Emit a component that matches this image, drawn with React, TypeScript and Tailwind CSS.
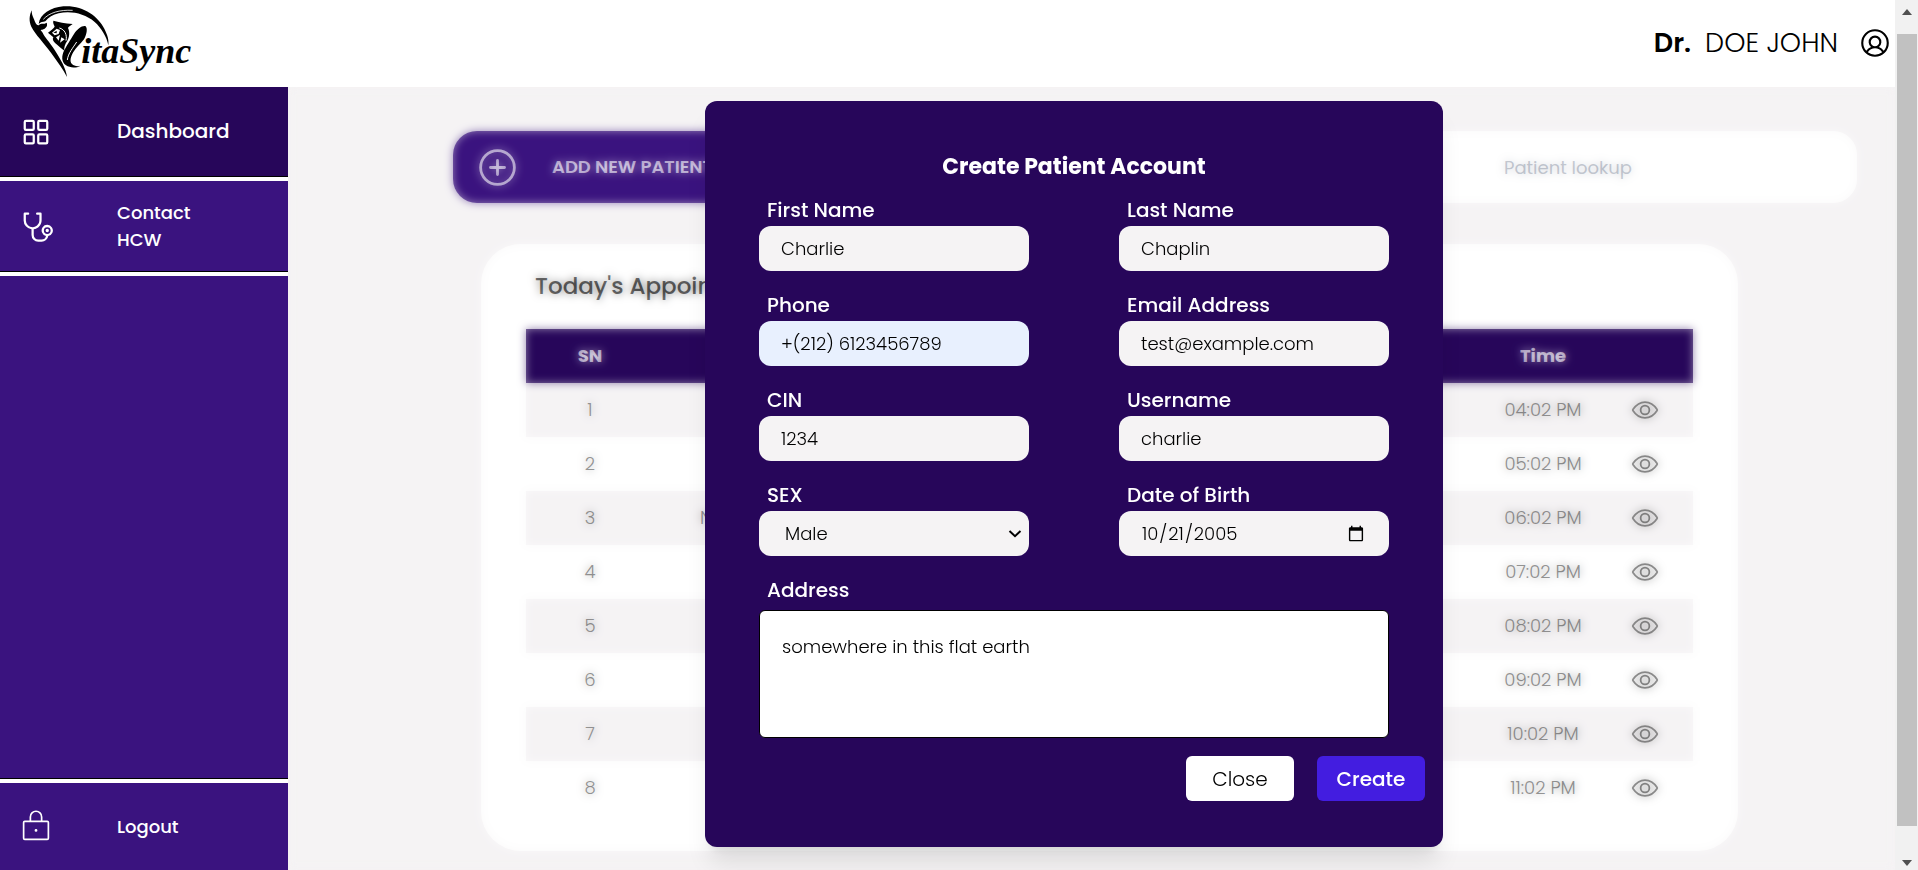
import type { ReactNode } from "react";
import { PiSquaresFour, PiStethoscope, PiLockLight, PiUserCircle, PiPlusCircle } from "react-icons/pi";
import { IoEyeOutline } from "react-icons/io5";

const appointments = [
  { sn: 1, name: "", time: "04:02 PM" },
  { sn: 2, name: "", time: "05:02 PM" },
  { sn: 3, name: "N", time: "06:02 PM" },
  { sn: 4, name: "", time: "07:02 PM" },
  { sn: 5, name: "", time: "08:02 PM" },
  { sn: 6, name: "", time: "09:02 PM" },
  { sn: 7, name: "", time: "10:02 PM" },
  { sn: 8, name: "", time: "11:02 PM" },
];

function Logo() {
  return (
    <svg viewBox="0 0 540 240" className="h-20 w-[180px] self-start" role="img" aria-label="VitaSync">
      {/* hood and blade */}
      <path d="M23 31 C15 48 15 66 22 80 C34 104 60 128 82 160 C100 186 118 208 129 231 C126 206 110 178 92 150 C76 124 62 112 56 98 C48 88 48 92 58 88 C66 84 72 78 68 68 C60 74 50 68 46 74 C40 80 34 70 30 58 C25 48 23 40 23 31 Z" />
      <path d="M44 72 C48 42 80 22 118 19 C176 15 222 48 241 86 C251 106 255 120 253 136 C248 110 232 84 212 66 C182 40 140 32 104 40 C86 44 74 52 64 64 C56 66 50 66 44 72 Z" />
      <path d="M58 58 C76 38 106 29 146 31" fill="none" stroke="#fff" strokeWidth="2.5" />
      {/* face */}
      <path d="M88 62 C104 66 122 70 146 72 C138 78 134 80 132 84 C138 96 136 112 130 122 C122 134 120 142 121 152 C112 146 104 138 94 130 C88 124 84 118 88 112 C82 106 76 102 72 98 C80 92 88 86 92 80 C90 74 86 70 88 62 Z" />
      <path d="M84 98 L98 86 L108 90 L104 102 L92 106 Z M96 112 L108 104 L104 122 Z M112 112 L122 118 L108 128 Z" fill="#fff" />
      <path d="M106 84 C122 88 130 104 126 122 M90 96 L102 98" fill="none" stroke="#fff" strokeWidth="3" />
      <path d="M88 98 L98 92 L98 100 Z" />
      {/* right stroke of the V */}
      <path d="M121 150 C128 138 140 118 150 102 C160 86 174 76 184 78 C192 84 188 104 180 118 C170 132 156 142 148 156 C140 170 136 184 144 192 C150 198 160 200 170 197 C156 205 138 204 126 196 C112 186 112 168 121 150 Z" />
      <path d="M130 180 C132 160 148 142 158 126" fill="none" stroke="#fff" strokeWidth="3" />
      <text x="172" y="189" className="text-[108px] font-bold italic" style={{ fontFamily: "'Liberation Serif', serif" }}>
        itaSync
      </text>
    </svg>
  );
}

function SideLink({ icon, children, className }: { icon: ReactNode; children: ReactNode; className: string }) {
  return (
    <a href="#" className={`flex shrink-0 items-center pl-[18px] font-medium leading-[27px] text-white ${className}`}>
      <span className="w-[99px] text-[36px]">{icon}</span>
      <span className="w-24">{children}</span>
    </a>
  );
}

const fieldClass = "h-[45px] w-full rounded-xl text-lg font-light text-black outline-none";

function Field({ label, id, wide, children }: { label: string; id: string; wide?: boolean; children: ReactNode }) {
  return (
    <div className={wide ? "col-span-2" : ""}>
      <label htmlFor={id} className="mb-0.5 block pl-2 text-xl font-medium leading-7 text-white">
        {label}
      </label>
      {children}
    </div>
  );
}

function PatientModal() {
  return (
    <section role="dialog" aria-labelledby="modal-title" className="w-[738px] rounded-xl bg-[#27065a] pt-[49px] pb-[46px] shadow-xl">
      <h2 id="modal-title" className="text-center text-[22px] font-bold leading-[33px] text-white">
        Create Patient Account
      </h2>
      <form>
        <div className="mt-[13px] grid grid-cols-2 gap-x-[90px] gap-y-5 px-[54px]">
          <Field label="First Name" id="first">
            <input id="first" defaultValue="Charlie" className={`${fieldClass} bg-[#f5f3f4] px-[22px]`} />
          </Field>
          <Field label="Last Name" id="last">
            <input id="last" defaultValue="Chaplin" className={`${fieldClass} bg-[#f5f3f4] px-[22px]`} />
          </Field>
          <Field label="Phone" id="phone">
            <input id="phone" type="tel" defaultValue="+(212) 6123456789" className={`${fieldClass} bg-[#e8f0fe] px-[22px]`} />
          </Field>
          <Field label="Email Address" id="email">
            <input id="email" type="email" defaultValue="test@example.com" className={`${fieldClass} bg-[#f5f3f4] px-[22px]`} />
          </Field>
          <Field label="CIN" id="cin">
            <input id="cin" defaultValue="1234" className={`${fieldClass} bg-[#f5f3f4] px-[22px]`} />
          </Field>
          <Field label="Username" id="username">
            <input id="username" defaultValue="charlie" className={`${fieldClass} bg-[#f5f3f4] px-[22px]`} />
          </Field>
          <Field label="SEX" id="sex">
            <div className="relative">
              <select id="sex" defaultValue="Male" className={`${fieldClass} appearance-none bg-[#f5f3f4] pr-8 pl-[26px]`}>
                <option>Male</option>
                <option>Female</option>
              </select>
              <svg viewBox="0 0 14 8" className="pointer-events-none absolute top-[19px] right-[7px] h-2 w-3.5" fill="none" stroke="black" strokeWidth="2">
                <path d="M1.5 1 L7 6.2 L12.5 1" />
              </svg>
            </div>
          </Field>
          <Field label="Date of Birth" id="dob">
            <input id="dob" type="date" defaultValue="2005-10-21" className={`${fieldClass} bg-[#f5f3f4] px-[22px]`} />
          </Field>
          <Field label="Address" id="address" wide>
            <textarea
              id="address"
              defaultValue="somewhere in this flat earth"
              className="mt-1.5 block h-32 w-full resize-none rounded-md border border-black bg-white p-[22px] text-lg font-light leading-[27px] text-black outline-none"
            />
          </Field>
        </div>
        <div className="mt-[18px] flex justify-end gap-[23px] pr-[18px]">
          <button type="button" className="h-[45px] w-[108px] rounded-md bg-white text-xl font-light text-black">
            Close
          </button>
          <button type="submit" className="h-[45px] w-[108px] rounded-md bg-[#431de0] text-xl font-medium text-white">
            Create
          </button>
        </div>
      </form>
    </section>
  );
}

function Appointments() {
  return (
    <section className="mt-[41px] mr-[119px] ml-7 rounded-[40px] bg-white px-[45px] pt-[27px] pb-9">
      <h2 className="mb-7 pl-[9px] text-[23px] font-medium leading-[30px]">Today's Appointments</h2>
      <table className="w-full table-fixed text-center text-lg font-light">
        <colgroup>
          <col className="w-32" />
          <col className="w-[180px]" />
          <col />
          <col className="w-[108px]" />
          <col className="w-24" />
        </colgroup>
        <thead className="h-[54px] bg-[#27065a] text-white">
          <tr>
            <th className="font-bold">SN</th>
            <th />
            <th />
            <th className="font-bold">Time</th>
            <th />
          </tr>
        </thead>
        <tbody className="text-neutral-700">
          {appointments.map((row) => (
            <tr key={row.sn} className="h-[54px] odd:bg-[#f5f3f4]">
              <td>{row.sn}</td>
              <td className="pl-[46px] text-left">{row.name}</td>
              <td />
              <td className="whitespace-nowrap">{row.time}</td>
              <td>
                <button type="button" aria-label="View appointment" className="block w-full">
                  <IoEyeOutline className="mx-auto text-[28px]" />
                </button>
              </td>
            </tr>
          ))}
        </tbody>
      </table>
    </section>
  );
}

function Scrollbar() {
  return (
    <div aria-hidden="true" className="flex w-[23px] shrink-0 flex-col items-center bg-[#f1f1f1] pt-[9px] pb-1">
      <svg viewBox="0 0 10 6" className="h-1.5 w-2.5 fill-[#505050]">
        <path d="M0 6 L5 0 L10 6 Z" />
      </svg>
      <div className="mt-[19px] mb-[34px] w-5 flex-1 bg-[#c1c1c1]" />
      <svg viewBox="0 0 10 6" className="h-1.5 w-2.5 fill-[#505050]">
        <path d="M0 0 L5 6 L10 0 Z" />
      </svg>
    </div>
  );
}

export default function App() {
  return (
    <div className="flex h-screen overflow-hidden font-[Poppins,Inter,sans-serif] text-black">
      <div className="flex min-w-0 flex-1 flex-col">
        <header className="flex h-[87px] shrink-0 items-center justify-between bg-white pr-[3px] pb-0.5 pl-6">
          <Logo />
          <div className="flex items-center">
            <p className="text-[27px] leading-9">
              <span className="mr-3.5 font-semibold">Dr.</span>
              <span className="font-light">DOE JOHN</span>
            </p>
            <button type="button" aria-label="Profile" className="ml-5 text-[34px]">
              <PiUserCircle />
            </button>
          </div>
        </header>
        <div className="flex min-h-0 flex-1">
          <nav className="flex w-72 shrink-0 flex-col gap-1 bg-white">
            <SideLink className="h-[90px] border-b border-black bg-[#27065a] text-xl" icon={<PiSquaresFour />}>
              Dashboard
            </SideLink>
            <SideLink className="h-[91px] border-b border-black bg-[#3a137f] text-lg" icon={<PiStethoscope />}>
              Contact HCW
            </SideLink>
            <div className="flex-1 border-b border-black bg-[#3a137f]" />
            <SideLink className="h-[87px] bg-[#3a137f] text-lg" icon={<PiLockLight />}>
              Logout
            </SideLink>
          </nav>
          <main className="relative min-w-0 flex-1 overflow-hidden bg-[#f5f3f4]">
            <div className="pt-11 pr-[38px] pl-[165px]">
              <div className="flex justify-between">
                <button type="button" className="flex h-[72px] w-[450px] items-center rounded-3xl bg-[#3a137f] pl-[22px] text-lg font-semibold text-white">
                  <PiPlusCircle className="mr-8 text-[45px]" />
                  ADD NEW PATIENT
                </button>
                <input
                  type="text"
                  aria-label="Patient lookup"
                  placeholder="Patient lookup"
                  className="h-[72px] w-[578px] rounded-3xl bg-white text-center text-lg placeholder:text-gray-400"
                />
              </div>
              <Appointments />
            </div>
            <div className="absolute inset-0 opacity-50 backdrop-blur-xs" />
            <div className="absolute inset-0 flex items-start justify-center pt-3.5 pr-[35px]">
              <PatientModal />
            </div>
          </main>
        </div>
      </div>
      <Scrollbar />
    </div>
  );
}
